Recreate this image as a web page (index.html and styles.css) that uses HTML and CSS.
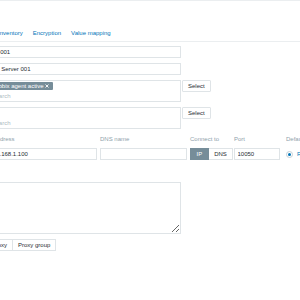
FILE: index.html
```html
<!DOCTYPE html>
<html lang="en">
  <head>
    <meta charset="UTF-8" />
    <meta name="viewport" content="width=device-width, initial-scale=1.0" />
    <title>Host</title>
    <link rel="stylesheet" href="styles.css">
  </head>
  <body>
    <div class="page">
      <ul class="tabs">
        <li><a href="#" class="tab-active">Host</a></li>
        <li><a href="#">IPMI</a></li>
        <li><a href="#">Tags</a></li>
        <li><a href="#">Macros</a></li>
        <li><a href="#">Inventory</a></li>
        <li><a href="#">Encryption</a></li>
        <li><a href="#">Value mapping</a></li>
      </ul>

      <form class="form">
        <label class="form-label">Host name</label>
        <div class="form-field">
          <input class="text-input" type="text" value="db-001" />
        </div>

        <label class="form-label">Visible name</label>
        <div class="form-field">
          <input class="text-input" type="text" value="My Server 001" />
        </div>

        <label class="form-label">Templates</label>
        <div class="form-field ms-row">
          <div class="multiselect">
            <div class="ms-list">
              <span class="ms-tag">Zabbix agent active
                <svg class="ms-remove" width="4" height="4" viewBox="0 0 4 4">
                  <path d="M0.5 0.5 L3.5 3.5 M3.5 0.5 L0.5 3.5" stroke="#fff" stroke-width="0.9" />
                </svg>
              </span>
            </div>
            <input class="ms-search" type="text" placeholder="Search" />
          </div>
          <button type="button" class="btn">Select</button>
        </div>

        <label class="form-label">Host groups</label>
        <div class="form-field ms-row">
          <div class="multiselect">
            <div class="ms-list"></div>
            <input class="ms-search" type="text" placeholder="Search" />
          </div>
          <button type="button" class="btn">Select</button>
        </div>

        <label class="form-label">Interfaces</label>
        <div class="form-field interfaces">
          <div class="iface-head">IP address</div>
          <div class="iface-head">DNS name</div>
          <div class="iface-head">Connect to</div>
          <div class="iface-head">Port</div>
          <div class="iface-head iface-head-default">Default</div>

          <input class="text-input" type="text" value="192.168.1.100" />
          <input class="text-input" type="text" value="" />
          <div class="toggle">
            <span class="toggle-item toggle-on">IP</span>
            <span class="toggle-item">DNS</span>
          </div>
          <input class="text-input" type="text" value="10050" />
          <div class="iface-default">
            <span class="radio"></span>
            <a href="#" class="link">Remove</a>
          </div>
        </div>

        <label class="form-label">Description</label>
        <div class="form-field">
          <textarea class="textarea"></textarea>
        </div>

        <label class="form-label form-label-wide">Monitored by</label>
        <div class="form-field">
          <div class="segmented">
            <span class="seg-item seg-on">Server</span>
            <span class="seg-item">Proxy</span>
            <span class="seg-item">Proxy group</span>
          </div>
        </div>
      </form>
    </div>
  </body>
</html>
```

FILE: styles.css
```css
html,
body {
  margin: 0;
  padding: 0;
  overflow: hidden;
}

body {
  font-family: "Liberation Sans", Arial, sans-serif;
  font-size: 6px;
  color: #1f2c33;
  background: #fff;
}

.page {
  border-top: 1px solid #ebeef0;
  padding-top: 28px;
}

.tabs {
  display: flex;
  gap: 10px;
  list-style: none;
  margin: 0 0 0 -99px;
  padding: 0 0 4px;
  border-bottom: 1px solid #ebeef0;
}
.tabs a {
  display: block;
  line-height: 8px;
  color: #0275b8;
  text-decoration: none;
}

.form {
  display: grid;
  grid-template-columns: 100px auto;
  row-gap: 5px;
  margin: 4px 0 0 -112px;
}
.form-label {
  text-align: right;
  padding-right: 10px;
  line-height: 12px;
  white-space: nowrap;
}
.form-label-wide {
  padding-right: 34px;
}
.form-field {
  min-width: 0;
}

input,
textarea,
button {
  font-family: inherit;
  font-size: 6px;
  color: #1f2c33;
}

.text-input {
  display: block;
  box-sizing: border-box;
  width: 193px;
  height: 12px;
  margin: 0;
  padding: 0 2.5px;
  border: 1px solid #dfe4e7;
  background: #fff;
  outline: none;
}

.ms-row {
  display: flex;
  align-items: flex-start;
  gap: 1px;
}
.multiselect {
  box-sizing: border-box;
  width: 193px;
  height: 22px;
  border: 1px solid #dfe4e7;
  background: #fff;
}
.ms-list {
  height: 8px;
  padding: 1px 1px 0;
}
.ms-tag {
  display: inline-flex;
  align-items: center;
  height: 8px;
  line-height: 8px;
  padding: 0 4px 0 1.5px;
  background: #768d99;
  color: #fff;
  border-radius: 1px;
  white-space: nowrap;
}
.ms-remove {
  margin-left: 1.5px;
}
.ms-search {
  display: block;
  box-sizing: border-box;
  width: 100%;
  height: 11px;
  margin: 0;
  padding: 0 2.5px;
  border: 0;
  outline: none;
  background: transparent;
}
.ms-search::placeholder {
  color: #acbbc2;
}

.btn {
  box-sizing: border-box;
  height: 12px;
  margin: 0;
  padding: 0 5px;
  border: 1px solid #dfe4e7;
  border-radius: 1px;
  background: #fff;
  line-height: 10px;
  cursor: pointer;
}

.interfaces {
  display: grid;
  grid-template-columns: 111px 87px 41px 46px auto;
  column-gap: 3px;
  row-gap: 5px;
  margin: 1px 0 17px -2px;
}
.interfaces .text-input {
  width: 100%;
}
.iface-head {
  line-height: 8px;
  color: #8fa2ac;
  white-space: nowrap;
}
.iface-head-default {
  padding-left: 3px;
}

.toggle {
  display: flex;
  height: 12px;
}
.toggle-item {
  box-sizing: border-box;
  height: 12px;
  line-height: 10px;
  padding: 0 5.5px;
  border: 1px solid #dfe4e7;
  background: #fff;
}
.toggle-item + .toggle-item {
  border-left: 0;
}
.toggle-on {
  background: #768d99;
  border-color: #768d99;
  color: #fff;
}

.iface-default {
  display: flex;
  align-items: center;
  gap: 4px;
  height: 12px;
  padding-left: 3px;
  white-space: nowrap;
}
.radio {
  position: relative;
  box-sizing: border-box;
  width: 7px;
  height: 7px;
  border: 1px solid #c5d0d6;
  border-radius: 50%;
  background: #fff;
}
.radio::after {
  content: "";
  position: absolute;
  left: 1px;
  top: 1px;
  width: 3px;
  height: 3px;
  border-radius: 50%;
  background: #0275b8;
}
.link {
  color: #0275b8;
  text-decoration: none;
}

.textarea {
  display: block;
  box-sizing: border-box;
  width: 193px;
  height: 52px;
  margin: 0;
  padding: 2px 2.5px;
  border: 1px solid #dfe4e7;
  resize: vertical;
  outline: none;
}

.segmented {
  display: inline-flex;
  margin-left: -31px;
}
.seg-item {
  box-sizing: border-box;
  height: 12px;
  line-height: 10px;
  padding: 0 5px;
  border: 1px solid #dfe4e7;
  background: #fff;
  white-space: nowrap;
}
.seg-item + .seg-item {
  border-left: 0;
}
.seg-on {
  background: #768d99;
  border-color: #768d99;
  color: #fff;
}
```
